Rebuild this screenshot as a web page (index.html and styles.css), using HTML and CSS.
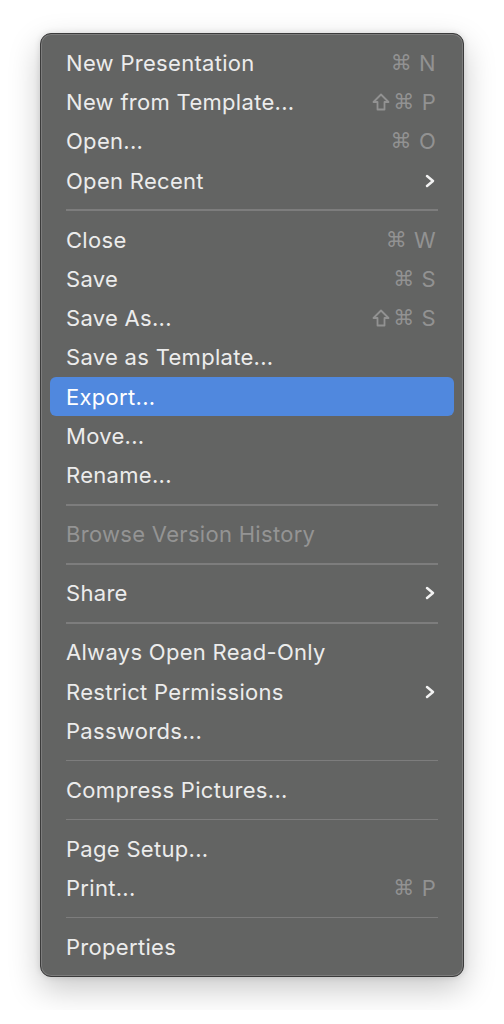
FILE: index.html
```html
<!DOCTYPE html>
<html>
  <head>
    <title>File Menu</title>
    <link rel="stylesheet" href="styles.css">
  </head>
  <body>
    <div class="menu">
      <div class="item"><span class="label">New Presentation</span><span class="keys"><span class="k">⌘</span><span class="l">N</span></span></div>
      <div class="item"><span class="label">New from Template...</span><span class="keys"><svg class="shift" width="18" height="18" viewBox="0 0 18 18"><path d="M9 1.5 L16.5 9 L12.5 9 L12.5 16.5 L5.5 16.5 L5.5 9 L1.5 9 Z" /></svg><span class="k">⌘</span><span class="l">P</span></span></div>
      <div class="item"><span class="label">Open...</span><span class="keys"><span class="k">⌘</span><span class="l">O</span></span></div>
      <div class="item"><span class="label">Open Recent</span><svg class="chev" width="10" height="14" viewBox="0 0 10 14"><path d="M2 2 L8 7 L2 12" /></svg></div>
      <div class="sep"></div>
      <div class="item"><span class="label">Close</span><span class="keys"><span class="k">⌘</span><span class="l">W</span></span></div>
      <div class="item"><span class="label">Save</span><span class="keys"><span class="k">⌘</span><span class="l">S</span></span></div>
      <div class="item"><span class="label">Save As...</span><span class="keys"><svg class="shift" width="18" height="18" viewBox="0 0 18 18"><path d="M9 1.5 L16.5 9 L12.5 9 L12.5 16.5 L5.5 16.5 L5.5 9 L1.5 9 Z" /></svg><span class="k">⌘</span><span class="l">S</span></span></div>
      <div class="item"><span class="label">Save as Template...</span></div>
      <div class="item active"><span class="label">Export...</span></div>
      <div class="item"><span class="label">Move...</span></div>
      <div class="item"><span class="label">Rename...</span></div>
      <div class="sep"></div>
      <div class="item disabled"><span class="label">Browse Version History</span></div>
      <div class="sep"></div>
      <div class="item"><span class="label">Share</span><svg class="chev" width="10" height="14" viewBox="0 0 10 14"><path d="M2 2 L8 7 L2 12" /></svg></div>
      <div class="sep"></div>
      <div class="item"><span class="label">Always Open Read-Only</span></div>
      <div class="item"><span class="label">Restrict Permissions</span><svg class="chev" width="10" height="14" viewBox="0 0 10 14"><path d="M2 2 L8 7 L2 12" /></svg></div>
      <div class="item"><span class="label">Passwords...</span></div>
      <div class="sep"></div>
      <div class="item"><span class="label">Compress Pictures...</span></div>
      <div class="sep"></div>
      <div class="item"><span class="label">Page Setup...</span></div>
      <div class="item"><span class="label">Print...</span><span class="keys"><span class="k">⌘</span><span class="l">P</span></span></div>
      <div class="sep"></div>
      <div class="item"><span class="label">Properties</span></div>
    </div>
  </body>
</html>
```

FILE: styles.css
```css
body { margin: 0; padding: 33px 40px; background: #fff; font-family: Inter, "Noto Sans", "DejaVu Sans", sans-serif; }

.menu { width: 404px; padding: 9px; background: #636463; border: 1px solid #3b3b3b; border-radius: 11px; box-shadow: inset 0 0 0 1px #7c7c7c, 0 12px 32px rgba(0, 0, 0, 0.22), 0 0 6px rgba(0, 0, 0, 0.12); }

.item { display: flex; align-items: center; justify-content: space-between; height: 39.3px; padding: 0 18px 0 16px; border-radius: 6px; color: #ececec; font-size: 22px; letter-spacing: 0.3px; }
.item.active { background: #5088de; color: #fff; }
.item.disabled { color: #949494; }

.keys { display: flex; align-items: center; color: #929292; font-size: 22px; }
.keys .k { font-family: "DejaVu Sans", sans-serif; font-size: 21px; margin-right: 7px; }
.keys .shift { margin-right: 3px; }
.shift path { fill: none; stroke: #929292; stroke-width: 1.8; stroke-linejoin: round; }

.chev { margin-right: 1px; }
.chev path { fill: none; stroke: #f2f2f2; stroke-width: 2.5; stroke-linecap: round; stroke-linejoin: round; }

.sep { height: 19.7px; display: flex; align-items: center; padding: 0 16px; }
.sep::before { content: ""; flex: 1; height: 1.5px; background: #7d7d7d; }
```
